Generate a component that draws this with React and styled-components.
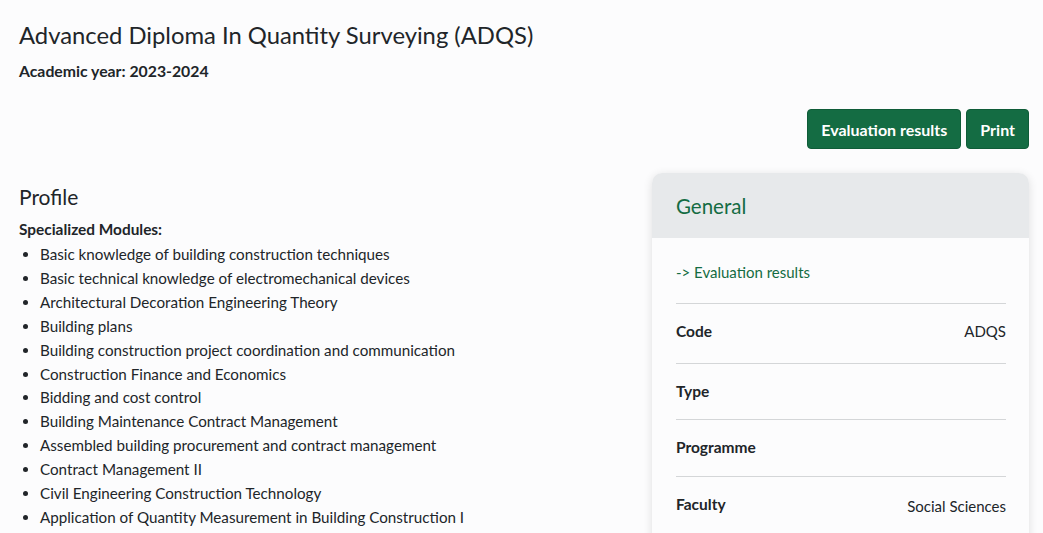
import React from "react";
import styled, { createGlobalStyle } from "styled-components";

const Global = createGlobalStyle`
  html, body { margin: 0; padding: 0; background: #fcfcfd; }
  body { font-family: "Lato", "Noto Sans", sans-serif; color: #212529; }
  * { box-sizing: border-box; }
`;

const Page = styled.div`
  padding: 17px 14px 0 19px;
  height: 533px;
  overflow: hidden;
`;

const Title = styled.h1`
  margin: 0;
  font-size: 23.8px;
  font-weight: 400;
  line-height: 36px;
`;

const Year = styled.div`
  margin-top: 8px;
  font-size: 15.8px;
  font-weight: 700;
  line-height: 20px;
`;

const Toolbar = styled.div`
  display: flex;
  justify-content: flex-end;
  gap: 5px;
  margin-top: 28px;
`;

const Button = styled.button`
  background: #146c43;
  color: #fff;
  border: 1px solid #0f5c38;
  border-radius: 4px;
  height: 40px;
  padding: 0 13px;
  font-family: inherit;
  font-size: 16px;
  font-weight: 700;
`;

const Columns = styled.div`
  display: grid;
  grid-template-columns: 1fr 377px;
  gap: 24px;
  margin-top: 24px;
  align-items: start;
`;

const Left = styled.div`
  padding-top: 10px;
`;

const Heading = styled.h2`
  margin: 0;
  font-size: 21px;
  font-weight: 400;
  line-height: 28px;
`;

const SubHeading = styled.div`
  margin-top: 7px;
  font-size: 15.4px;
  font-weight: 700;
  line-height: 22px;
`;

const List = styled.ul`
  margin: 3px 0 0;
  padding-left: 21px;
  font-size: 15.2px;
  line-height: 23.9px;
`;

const Card = styled.div`
  background: #fcfcfd;
  border-radius: 10px;
  box-shadow: 0 2px 10px rgba(0, 0, 0, 0.12);
  overflow: hidden;
`;

const CardHeader = styled.div`
  background: #e7e9eb;
  height: 65px;
  display: flex;
  align-items: center;
  padding: 0 24px;
  color: #146c43;
  font-size: 20.5px;
`;

const CardBody = styled.div`
  padding: 0 23px 40px 24px;
`;

const LinkRow = styled.div`
  padding: 23px 0 20px;
  border-bottom: 1px solid #d4d6d8;
  color: #146c43;
  font-size: 15px;
  line-height: 22px;
`;

const Row = styled.div`
  display: flex;
  justify-content: space-between;
  align-items: flex-start;
  padding: ${(p) => p.$pad || "17px 0 17px"};
  border-bottom: ${(p) => (p.$last ? "none" : "1px solid #d4d6d8")};
  font-size: 15px;
  line-height: 22px;
`;

const Label = styled.span`
  font-weight: 700;
  font-size: 15.5px;
`;

const Value = styled.span`
  position: relative;
  top: ${(p) => p.$top || 0}px;
`;

const modules = [
  "Basic knowledge of building construction techniques",
  "Basic technical knowledge of electromechanical devices",
  "Architectural Decoration Engineering Theory",
  "Building plans",
  "Building construction project coordination and communication",
  "Construction Finance and Economics",
  "Bidding and cost control",
  "Building Maintenance Contract Management",
  "Assembled building procurement and contract management",
  "Contract Management II",
  "Civil Engineering Construction Technology",
  "Application of Quantity Measurement in Building Construction I",
];

export default function App() {
  return (
    <>
      <Global />
      <Page>
        <Title>Advanced Diploma In Quantity Surveying (ADQS)</Title>
        <Year>Academic year: 2023-2024</Year>
        <Toolbar>
          <Button>Evaluation results</Button>
          <Button>Print</Button>
        </Toolbar>
        <Columns>
          <Left>
            <Heading>Profile</Heading>
            <SubHeading>Specialized Modules:</SubHeading>
            <List>
              {modules.map((m) => (
                <li key={m}>{m}</li>
              ))}
            </List>
          </Left>
          <Card>
            <CardHeader>General</CardHeader>
            <CardBody>
              <LinkRow>-&gt; Evaluation results</LinkRow>
              <Row $pad="16px 0 21px">
                <Label>Code</Label>
                <Value>ADQS</Value>
              </Row>
              <Row $pad="16px 0 17px">
                <Label>Type</Label>
              </Row>
              <Row $pad="16px 0 18px">
                <Label>Programme</Label>
              </Row>
              <Row $pad="16px 0 18px" $last>
                <Label>Faculty</Label>
                <Value $top={2}>Social Sciences</Value>
              </Row>
            </CardBody>
          </Card>
        </Columns>
      </Page>
    </>
  );
}
